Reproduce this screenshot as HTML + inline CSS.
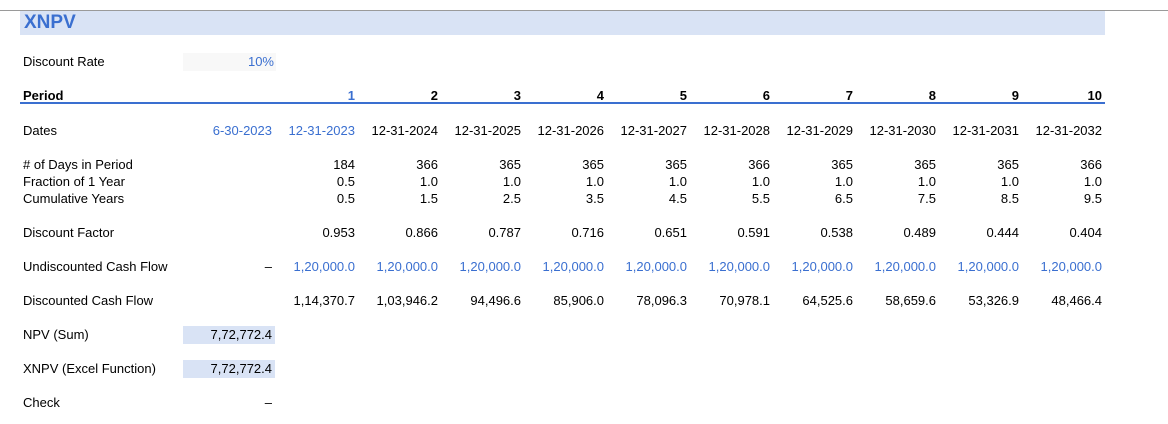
<!DOCTYPE html><html><head><style>
body{margin:0;width:1168px;height:424px;background:#fff;font-family:"Liberation Sans",Arial,sans-serif;font-size:13px;color:#000;position:relative;overflow:hidden}
.topline{position:absolute;left:0;top:10px;width:1168px;height:1px;background:#9a9a9a}
.title{position:absolute;left:20px;top:11px;width:1085px;height:24px;background:#d9e3f5;color:#3a6fd0;font-weight:bold;font-size:19px;line-height:24px;padding-left:4px;box-sizing:border-box}
.r{position:absolute;left:23px;display:flex;height:16px;line-height:16px}
.r div{flex:none;text-align:right;white-space:nowrap}
.r .l{width:160px;text-align:left}
.r .a{width:89px;padding-right:0px}
.r .c{width:83px}
.b{color:#3a6fd0}
.hl{background:#d9e3f5}
.gr{background:#f8f8f8}
.pl{position:absolute;left:20px;top:102px;width:1085px;height:2px;background:#3a6fd0}
</style></head><body>
<div class="topline"></div>
<div class="title">XNPV</div>
<div class="r" style="top:54px"><div class="l">Discount Rate</div><div class="a b gr" style="height:18px;margin-top:-1px;line-height:18px;width:91px;padding-right:2px">10%</div></div>
<div class="r" style="top:88px;font-weight:bold"><div class="l">Period</div><div class="a"></div><div class="c b">1</div><div class="c">2</div><div class="c">3</div><div class="c">4</div><div class="c">5</div><div class="c">6</div><div class="c">7</div><div class="c">8</div><div class="c">9</div><div class="c">10</div></div>
<div class="pl"></div>
<div class="r" style="top:123px"><div class="l">Dates</div><div class="a b">6-30-2023</div><div class="c b">12-31-2023</div><div class="c">12-31-2024</div><div class="c">12-31-2025</div><div class="c">12-31-2026</div><div class="c">12-31-2027</div><div class="c">12-31-2028</div><div class="c">12-31-2029</div><div class="c">12-31-2030</div><div class="c">12-31-2031</div><div class="c">12-31-2032</div></div>
<div class="r" style="top:157px"><div class="l"># of Days in Period</div><div class="a"></div><div class="c">184</div><div class="c">366</div><div class="c">365</div><div class="c">365</div><div class="c">365</div><div class="c">366</div><div class="c">365</div><div class="c">365</div><div class="c">365</div><div class="c">366</div></div>
<div class="r" style="top:174px"><div class="l">Fraction of 1 Year</div><div class="a"></div><div class="c">0.5</div><div class="c">1.0</div><div class="c">1.0</div><div class="c">1.0</div><div class="c">1.0</div><div class="c">1.0</div><div class="c">1.0</div><div class="c">1.0</div><div class="c">1.0</div><div class="c">1.0</div></div>
<div class="r" style="top:191px"><div class="l">Cumulative Years</div><div class="a"></div><div class="c">0.5</div><div class="c">1.5</div><div class="c">2.5</div><div class="c">3.5</div><div class="c">4.5</div><div class="c">5.5</div><div class="c">6.5</div><div class="c">7.5</div><div class="c">8.5</div><div class="c">9.5</div></div>
<div class="r" style="top:225px"><div class="l">Discount Factor</div><div class="a"></div><div class="c">0.953</div><div class="c">0.866</div><div class="c">0.787</div><div class="c">0.716</div><div class="c">0.651</div><div class="c">0.591</div><div class="c">0.538</div><div class="c">0.489</div><div class="c">0.444</div><div class="c">0.404</div></div>
<div class="r" style="top:259px"><div class="l">Undiscounted Cash Flow</div><div class="a">–</div><div class="c b">1,20,000.0</div><div class="c b">1,20,000.0</div><div class="c b">1,20,000.0</div><div class="c b">1,20,000.0</div><div class="c b">1,20,000.0</div><div class="c b">1,20,000.0</div><div class="c b">1,20,000.0</div><div class="c b">1,20,000.0</div><div class="c b">1,20,000.0</div><div class="c b">1,20,000.0</div></div>
<div class="r" style="top:293px"><div class="l">Discounted Cash Flow</div><div class="a"></div><div class="c">1,14,370.7</div><div class="c">1,03,946.2</div><div class="c">94,496.6</div><div class="c">85,906.0</div><div class="c">78,096.3</div><div class="c">70,978.1</div><div class="c">64,525.6</div><div class="c">58,659.6</div><div class="c">53,326.9</div><div class="c">48,466.4</div></div>
<div class="r" style="top:327px"><div class="l">NPV (Sum)</div><div class="a hl" style="height:18px;line-height:18px;margin-top:-1px;padding-right:3px;width:89px">7,72,772.4</div></div>
<div class="r" style="top:361px"><div class="l">XNPV (Excel Function)</div><div class="a hl" style="height:18px;line-height:18px;margin-top:-1px;padding-right:3px;width:89px">7,72,772.4</div></div>
<div class="r" style="top:395px"><div class="l">Check</div><div class="a">–</div></div>
</body></html>
